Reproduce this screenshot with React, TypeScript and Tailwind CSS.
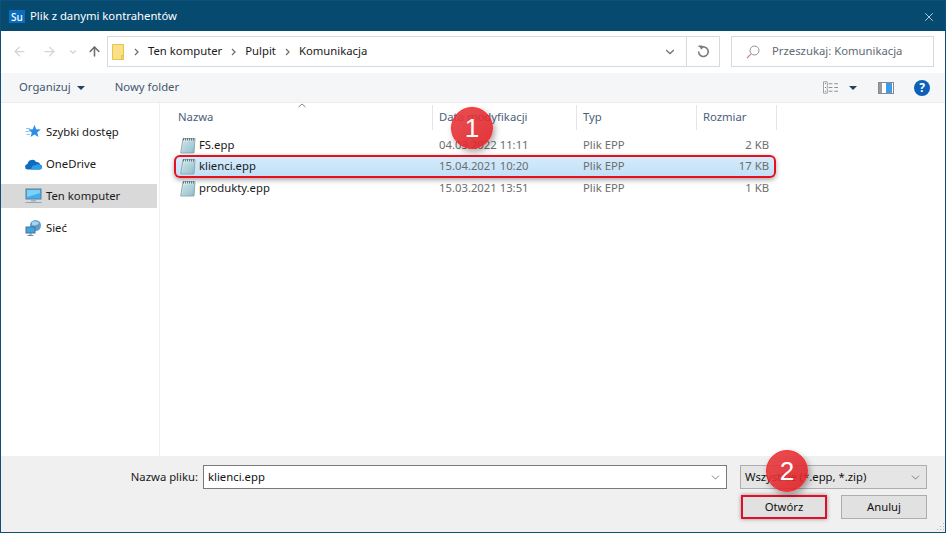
import { ArrowLeft, ArrowRight, ArrowUp, ChevronDown, X } from "lucide-react";

const files = [
  { name: "FS.epp", date: "04.03.2022 11:11", size: "2 KB" },
  { name: "klienci.epp", date: "15.04.2021 10:20", size: "17 KB", selected: true },
  { name: "produkty.epp", date: "15.03.2021 13:51", size: "1 KB" },
];

function FileIcon() {
  return (
    <svg width="16" height="17" viewBox="0 0 16 17" className="shrink-0">
      <defs>
        <linearGradient id="pad" x1="0" y1="0" x2="1" y2="1">
          <stop offset="0" stopColor="#eef7f8" />
          <stop offset="1" stopColor="#7db8c8" />
        </linearGradient>
      </defs>
      <path d="M3 1.500h12l-1 14.500H0.700z" fill="url(#pad)" stroke="#98a9ae" strokeWidth="1" />
      <path d="M3.500 1v2.500M5.500 1v2.500M7.500 1v2.500M9.500 1v2.500M11.500 1v2.500M13.500 1v2.500" stroke="#66777e" strokeWidth="1" />
      <path d="M3.500 6h9M3.200 8h9M3 10h9M2.800 12h9M2.500 14h9" stroke="#a9cdd6" strokeWidth="0.800" />
    </svg>
  );
}

function StarIcon() {
  return (
    <svg width="16" height="16" viewBox="0 0 16 16">
      <path d="M9.500 0.800l1.700 4.500 4.600.2-3.600 2.900 1.300 4.600-4-2.600-4 2.600 1.300-4.600-3.600-2.900 4.600-.2z" fill="#2b8ee6" />
      <path d="M1 4.500h4M0.500 7.500h4M1.500 10.500h3.500" stroke="#8cc6f2" strokeWidth="1" />
    </svg>
  );
}

function CloudIcon() {
  return (
    <svg width="17" height="12" viewBox="0 0 17 12">
      <path d="M3 11.500a2.700 2.700 0 0 1-.4-5.400 4.600 4.600 0 0 1 8.600-2 3.400 3.400 0 0 1 4 2.500 2.500 2.500 0 0 1-.4 4.900z" fill="#0f6cbd" />
      <path d="M6 11.500h8.800a2.100 2.100 0 0 0 1.200-3.800c-2-1.600-4.500-1.900-5.800-.2-1.800-.8-3.400.6-4.200 4z" fill="#2a9ee8" />
    </svg>
  );
}

function ComputerIcon() {
  return (
    <svg width="17" height="16" viewBox="0 0 17 16">
      <rect x="1" y="1" width="15" height="10" fill="#43b0ee" stroke="#5d7f98" />
      <path d="M2 2h13v3L2 9z" fill="#7fd0f7" />
      <path d="M6 12h5v1.500H6z" fill="#9fb3c2" />
      <path d="M0.500 14.500h16" stroke="#8fa6b8" strokeWidth="1" />
    </svg>
  );
}

function NetworkIcon() {
  return (
    <svg width="17" height="16" viewBox="0 0 17 16">
      <circle cx="10.500" cy="5.500" r="5.500" fill="#5f9cc9" />
      <path d="M7 2c2-1 5-1 7 1-1 2-4 3-7 2z" fill="#a7d3ee" />
      <rect x="1" y="7" width="9" height="6" fill="#3ba6e6" stroke="#4f7187" />
      <path d="M4 14h3M2.500 15.500h6" stroke="#6f8a9c" strokeWidth="1" />
    </svg>
  );
}

function Breadcrumb({ label }: { label: string }) {
  return (
    <div className="flex items-center">
      <svg width="5" height="8" viewBox="0 0 5 8" className="mx-[9px]">
        <path d="M1 1l3 3-3 3" fill="none" stroke="#707070" strokeWidth="1.300" />
      </svg>
      <span className="text-[11.300px] text-[#1a1a1a]">{label}</span>
    </div>
  );
}

function SidebarItem({ label, icon, active }: { label: string; icon: React.ReactNode; active?: boolean }) {
  return (
    <div className={`flex h-6 items-center pl-6 text-[11.300px] text-[#1a1a1a] ${active ? "bg-[#d9d9d9]" : ""}`}>
      <div className="flex w-[21px] justify-start">{icon}</div>
      <span>{label}</span>
    </div>
  );
}

function Badge({ n, className }: { n: number; className: string }) {
  return (
    <div
      className={`absolute flex items-center justify-center rounded-full border border-[#ff2a2a] bg-gradient-to-br from-[#e83a3e]/90 to-[#dc1c24]/90 font-['Liberation_Sans',sans-serif] text-[26px] leading-none text-white shadow-[2px_3px_6px_rgba(0,0,0,0.35)] ${className}`}
    >
      {n}
    </div>
  );
}

export default function App() {
  return (
    <div className="relative flex h-[533px] w-[946px] flex-col overflow-hidden border border-[#0f5078] bg-white font-['Noto_Sans',sans-serif]">
      {/* title bar */}
      <div className="flex h-[30px] shrink-0 items-center bg-[#074a6f] pl-[8px] pr-[4px] pt-[1px] text-white">
        <div className="flex h-[13px] w-[16px] items-center justify-center bg-[#0b6dbd] text-[10px] font-medium leading-none">Su</div>
        <span className="ml-[5px] text-[11.300px]">Plik z danymi kontrahentów</span>
        <X className="ml-auto mr-[5px] h-[14px] w-[14px]" strokeWidth={1.200} />
      </div>

      {/* address row */}
      <div className="flex h-[42px] shrink-0 items-start pt-[5px]">
        <div className="flex h-[31px] w-[106px] items-center pl-[11px]">
          <ArrowLeft className="h-[15px] w-[15px] text-[#d4d4d4]" strokeWidth={2} />
          <ArrowRight className="ml-[15px] h-[15px] w-[15px] text-[#d4d4d4]" strokeWidth={2} />
          <ChevronDown className="ml-[11px] h-[10px] w-[10px] text-[#d4d4d4]" strokeWidth={3} />
          <ArrowUp className="ml-[9px] h-[15px] w-[15px] text-[#6f6f6f]" strokeWidth={2.500} />
        </div>
        <div className="flex h-[31px] w-[613px] items-center border border-[#d9d9d9]">
          <svg width="13" height="16" viewBox="0 0 13 16" className="ml-[4px]">
            <path d="M0.500 0.500h11v15h-11z" fill="#fbe08a" stroke="#e8c24f" />
            <path d="M9.500 11.500h2v4h-2z" fill="#f6d36a" stroke="#e8c24f" />
          </svg>
          <Breadcrumb label="Ten komputer" />
          <Breadcrumb label="Pulpit" />
          <Breadcrumb label="Komunikacja" />
          <ChevronDown className="ml-auto mr-[9px] h-[14px] w-[14px] text-[#707070]" strokeWidth={2} />
          <div className="flex h-full w-[33px] items-center justify-center border-l border-[#d9d9d9]">
            <svg width="13" height="13" viewBox="0 0 13 13" fill="none" stroke="#7a7a7a" strokeWidth="1.600">
              <path d="M3.300 3a4.800 4.800 0 1 1-1.700 3.500" />
              <path d="M1.500 1.200h3v3" />
            </svg>
          </div>
        </div>
        <div className="ml-[11px] flex h-[31px] w-[203px] items-center border border-[#d9d9d9] pl-[14px]">
          <svg width="14" height="14" viewBox="0 0 14 14" fill="none">
            <circle cx="8.500" cy="5.500" r="4.500" stroke="#8f8f9f" strokeWidth="1" />
            <path d="M5.200 8.800L1 13" stroke="#c9849a" strokeWidth="1.200" />
          </svg>
          <span className="ml-[12px] text-[11.300px] text-[#5f6a75]">Przeszukaj: Komunikacja</span>
        </div>
      </div>

      {/* toolbar */}
      <div className="flex h-[30px] shrink-0 items-center border-b border-[#ececec] bg-[#f5f6f7] pl-[18px] text-[11.300px] text-[#44566e]">
        <span>Organizuj</span>
        <div className="ml-[6px] h-0 w-0 border-x-[4px] border-t-[4px] border-x-transparent border-t-[#24405e]" />
        <span className="ml-[30px]">Nowy folder</span>
        <div className="ml-auto flex items-center pr-[15px]">
          <svg width="16" height="13" viewBox="0 0 17 13">
            <path d="M0.500 0.500h4v12h-4z" fill="#fff" stroke="#9a9a9a" />
            <path d="M2 2.500h1M2 6.500h1" stroke="#555" />
            <path d="M2 10.500h1" stroke="#c0392b" />
            <path d="M6 2.500h4M12 2.500h4M6 6.500h4M12 6.500h4M6 10.500h4M12 10.500h4" stroke="#8a8a8a" />
          </svg>
          <div className="ml-[10px] h-0 w-0 border-x-[4px] border-t-[4px] border-x-transparent border-t-[#24405e]" />
          <svg width="16" height="12" viewBox="0 0 16 12" className="ml-[21px]">
            <rect x="0.500" y="0.500" width="15" height="11" fill="#fff" stroke="#8a8a8a" />
            <rect x="1" y="1" width="3" height="10" fill="#9a9a9a" />
            <rect x="8" y="1" width="6" height="10" fill="#3f9be6" />
          </svg>
          <div className="ml-[20px] flex h-4 w-4 items-center justify-center rounded-full bg-[#0d5fb8] text-[12px] font-bold leading-none text-white">?</div>
        </div>
      </div>

      {/* main */}
      <div className="flex min-h-0 flex-1">
        <div className="w-[159px] shrink-0 border-r border-[#f0f0f0] pr-[2px] pt-[17px]">
          <div className="flex flex-col gap-2">
            <SidebarItem label="Szybki dostęp" icon={<StarIcon />} />
            <SidebarItem label="OneDrive" icon={<CloudIcon />} />
            <SidebarItem label="Ten komputer" icon={<ComputerIcon />} active />
            <SidebarItem label="Sieć" icon={<NetworkIcon />} />
          </div>
        </div>
        <div className="relative flex-1 pl-[14px]">
          <div className="grid h-[27px] w-[603px] grid-cols-[259px_144px_120px_80px] pt-[2px] text-[11.300px] text-[#4c607a]">
            <div className="flex items-center border-r border-[#e5e5e5] pl-[4px]">Nazwa</div>
            <div className="flex items-center border-r border-[#e5e5e5] pl-[6px]">Data modyfikacji</div>
            <div className="flex items-center border-r border-[#e5e5e5] pl-[6px]">Typ</div>
            <div className="flex items-center border-r border-[#e5e5e5] pl-[6px]">Rozmiar</div>
          </div>
          <svg width="8" height="5" viewBox="0 0 8 5" className="absolute left-[138px] top-0">
            <path d="M0.500 4l3.500-3 3.500 3" fill="none" stroke="#8a8a8a" />
          </svg>
          <div className="mt-[5px] flex w-[602px] flex-col">
            {files.map((f) => (
              <div
                key={f.name}
                className={`grid grid-cols-[260px_144px_120px_78px] items-center text-[11.300px] ${
                  f.selected
                    ? "h-[23px] rounded-[6px] bg-gradient-to-b from-[#d7ecfb] to-[#bfdff7] shadow-[inset_0_0_0_2px_#e8101e,0_2px_5px_rgba(0,0,0,0.35)]"
                    : "h-5"
                }`}
              >
                <div className="flex items-center pl-[6px] text-[#1a1a1a]">
                  <FileIcon />
                  <span className="ml-[3px]">{f.name}</span>
                </div>
                <div className="pl-[5px] text-[#6d6d6d]">{f.date}</div>
                <div className="pl-[5px] text-[#6d6d6d]">Plik EPP</div>
                <div className="pr-[7px] text-right text-[#6d6d6d]">{f.size}</div>
              </div>
            ))}
          </div>
        </div>
      </div>

      {/* bottom */}
      <div className="h-[76px] shrink-0 bg-[#f0f0f0] pr-[18px] pt-[9px]">
        <div className="flex items-center justify-end">
          <span className="mr-[5px] text-[11.300px] text-[#1a1a1a]">Nazwa pliku:</span>
          <div className="flex h-[24px] w-[524px] items-center justify-between border border-[#7a7a7a] bg-white px-[4px] text-[11.300px] text-[#111]">
            <span>klienci.epp</span>
            <ChevronDown className="h-[13px] w-[13px] text-[#555]" strokeWidth={1.300} />
          </div>
          <div className="ml-[13px] flex h-[24px] w-[187px] items-center justify-between border border-[#adadad] bg-[#e5e5e5] px-[4px] text-[11.300px] text-[#111]">
            <span>Wszystkie (*.epp, *.zip)</span>
            <ChevronDown className="h-[13px] w-[13px] text-[#555]" strokeWidth={1.300} />
          </div>
        </div>
        <div className="mt-[6px] flex justify-end gap-[14px]">
          <button className="h-[24px] w-[86px] border-2 border-[#e0102a] bg-[#e1e1e1] text-[11.300px] text-[#111] shadow-[0_0_4px_rgba(0,0,0,0.4)]">Otwórz</button>
          <button className="h-[24px] w-[86px] border border-[#adadad] bg-[#e1e1e1] text-[11.300px] text-[#111]">Anuluj</button>
        </div>
      </div>

      <svg width="10" height="10" viewBox="0 0 10 10" className="absolute bottom-0 right-0">
        <path d="M8 1h1v1H8zM5 4h1v1H5zM8 4h1v1H8zM2 7h1v1H2zM5 7h1v1H5zM8 7h1v1H8z" fill="#b5b5b5" />
      </svg>

      <Badge n={1} className="left-[450px] top-[106px] h-[42px] w-[42px]" />
      <Badge n={2} className="left-[765px] top-[449px] h-[42px] w-[42px]" />
    </div>
  );
}
